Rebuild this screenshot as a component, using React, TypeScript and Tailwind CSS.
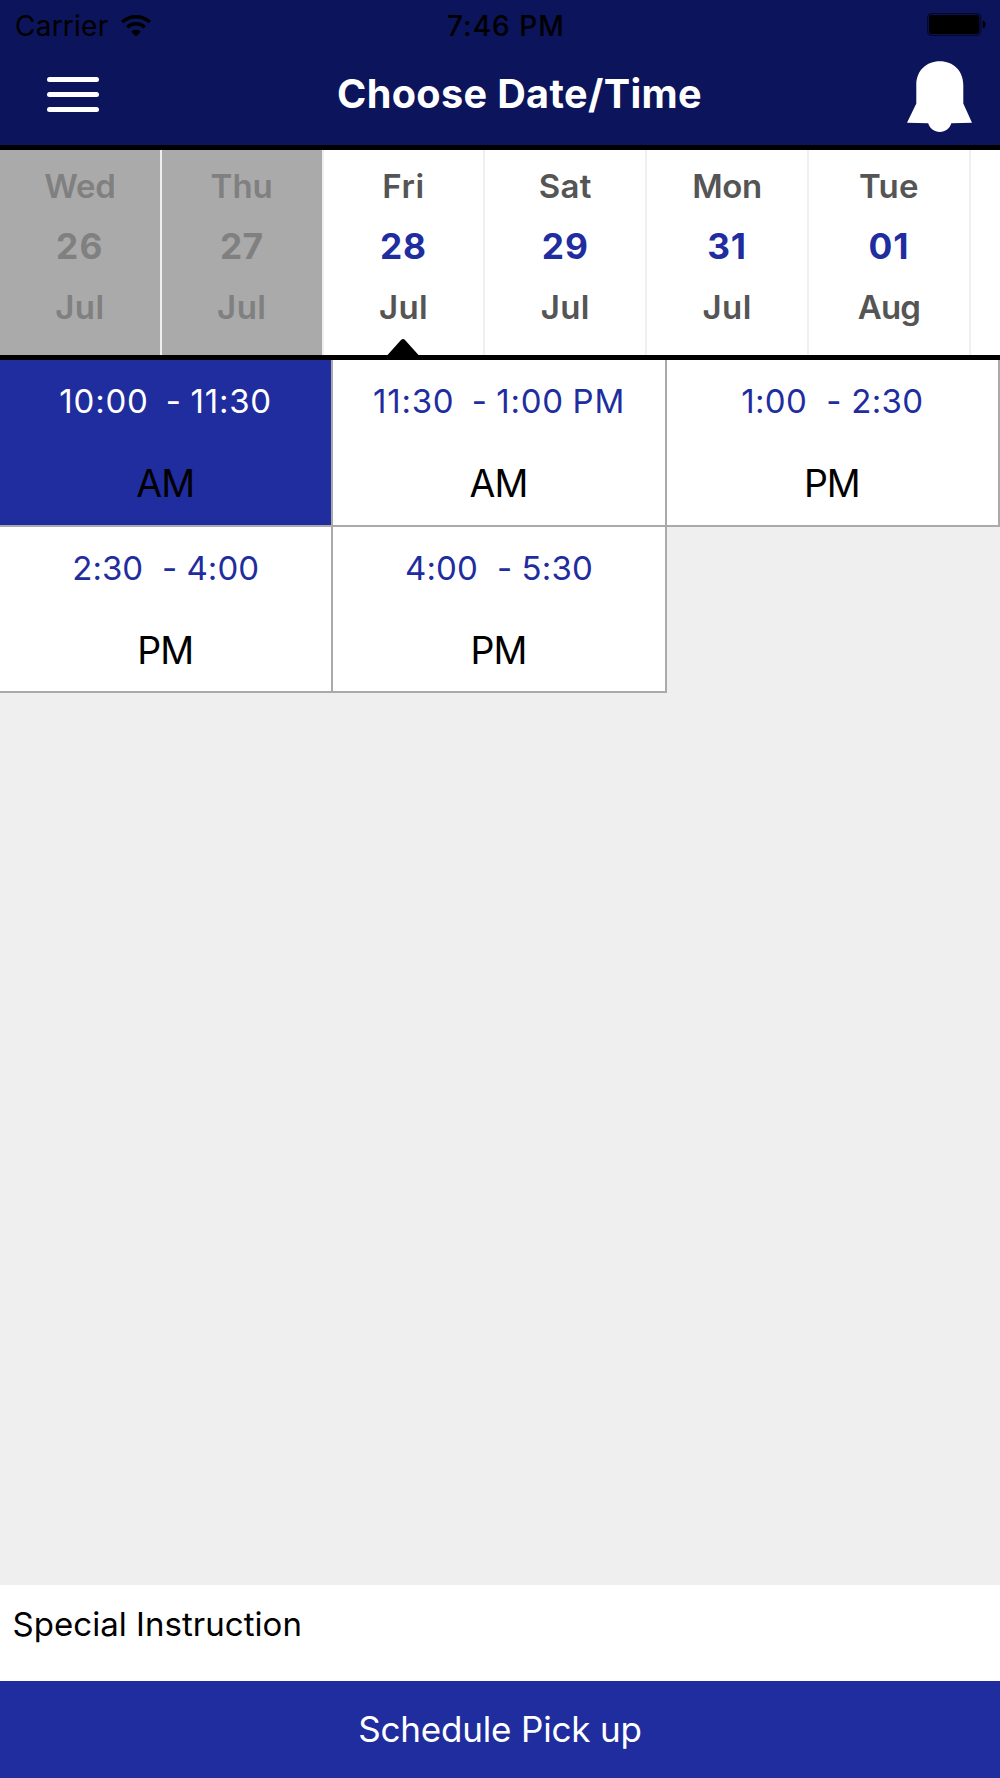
type Day = { name: string; date: string; month: string; state?: "past" | "active"; nameGap: string; dateGap: string; monthGap: string };

const days: Day[] = [
  { name: "Wed", date: "26", month: "Jul", state: "past", nameGap: "tracking-[-0.3px]", dateGap: "tracking-[1.2px]", monthGap: "tracking-[0.4px]" },
  { name: "Thu", date: "27", month: "Jul", state: "past", nameGap: "", dateGap: "tracking-[0.2px]", monthGap: "tracking-[0.4px]" },
  { name: "Fri", date: "28", month: "Jul", state: "active", nameGap: "tracking-[0.6px]", dateGap: "tracking-[1px]", monthGap: "tracking-[0.4px]" },
  { name: "Sat", date: "29", month: "Jul", nameGap: "tracking-[0.4px]", dateGap: "tracking-[1px]", monthGap: "tracking-[0.4px]" },
  { name: "Mon", date: "31", month: "Jul", nameGap: "tracking-[-0.3px]", dateGap: "tracking-[0.8px]", monthGap: "tracking-[0.4px]" },
  { name: "Tue", date: "01", month: "Aug", nameGap: "tracking-[0.3px]", dateGap: "tracking-[0.8px]", monthGap: "tracking-[-0.9px]" },
];

const slots = [
  { time: "10:00\u00a0 - 11:30", period: "AM", selected: true, gap: "tracking-[0.8px] [word-spacing:-1.5px]" },
  { time: "11:30\u00a0 - 1:00 PM", period: "AM", gap: "tracking-[0.8px] [word-spacing:-1.5px]" },
  { time: "1:00\u00a0 - 2:30", period: "PM", gap: "tracking-[0.31px]" },
  { time: "2:30\u00a0 - 4:00", period: "PM", gap: "tracking-[0.05px]" },
  { time: "4:00\u00a0 - 5:30", period: "PM", gap: "tracking-[0.14px]" },
];

function WifiIcon() {
  return (
    <svg className="ml-[13px] h-[22px] w-[30px]" viewBox="0 0 30 22" fill="none" stroke="#000" strokeWidth="3.4">
      <path d="M1.2 7.1C9-0.1 21-0.1 28.8 7.1" />
      <path d="M6.2 12.2C11.2 7.5 18.8 7.5 23.8 12.2" />
      <path d="M15 21.5L10.2 16.7C12.8 14.2 17.2 14.2 19.8 16.7Z" fill="#000" stroke="none" />
    </svg>
  );
}

function BatteryIcon() {
  return (
    <svg className="h-[23px] w-[60px]" viewBox="0 0 60 23">
      <rect x="0.6" y="0.6" width="53.2" height="21.8" rx="4" fill="none" stroke="#050828" strokeWidth="1.2" />
      <rect x="2" y="2" width="50.4" height="19" rx="2.4" fill="#000" />
      <path d="M55.8 7.6C59.6 8.2 59.6 14.8 55.8 15.4Z" fill="#000" />
    </svg>
  );
}

function BellIcon() {
  return (
    <svg className="h-[71px] w-[65px]" viewBox="0 0 65 71" fill="#fff">
      <path d="M9.3 24C9.3 9.5 19.5 0.3 32.8 0.3S56.3 9.5 56.3 24V42.5L65 61.8L44.3 62.3C43 67.5 38.3 71 32.8 71S22.6 67.5 21.2 62.3L0 61.8L9.3 42.5Z" />
    </svg>
  );
}

export default function App() {
  return (
    <div className="flex h-[1778px] w-[1000px] flex-col overflow-hidden bg-[#efefef] font-['Inter',sans-serif] text-black">
      <header className="h-[150px] shrink-0 border-b-[5px] border-black bg-[#0c145b]">
        <div className="flex h-[51px] items-center">
          <div className="flex w-[447px] items-center pl-[15px]">
            <span className="pt-px text-[28px] leading-[51px] tracking-[0.24px]">Carrier</span>
            <WifiIcon />
          </div>
          <span className="pt-px text-[28px] leading-[51px] font-medium tracking-[1.05px]">7:46 PM</span>
          <div className="mr-[13px] ml-auto pb-[2px]">
            <BatteryIcon />
          </div>
        </div>
        <div className="flex h-[85px] items-center text-white">
          <div className="w-[337px] pt-[2px] pl-[46.7px]">
            <button className="flex flex-col gap-[10.5px]" aria-label="Menu">
              <span className="h-[4.5px] w-[52px] rounded-full bg-white" />
              <span className="h-[4.5px] w-[52px] rounded-full bg-white" />
              <span className="h-[4.5px] w-[52px] rounded-full bg-white" />
            </button>
          </div>
          <h1 className="pt-[2px] text-[39.6px] leading-[85px] font-[650] tracking-[0.37px] whitespace-nowrap">Choose Date/Time</h1>
          <button className="mr-[28px] ml-auto pt-[6px]" aria-label="Notifications">
            <BellIcon />
          </button>
        </div>
      </header>

      <div className="flex h-[210px] shrink-0 overflow-hidden border-b-[5px] border-black bg-white">
        {days.map((d) => (
          <div
            key={d.date}
            className={`relative flex w-[161.8px] shrink-0 flex-col items-center border-r-2 border-[#efefef] pt-[6px] text-[33px] leading-[60px] font-[560] ${
              d.state === "past" ? "bg-[#aaaaaa] bg-clip-padding text-[#808080]" : "text-[#555555]"
            }`}
          >
            <span className={d.nameGap}>{d.name}</span>
            <span className={`pt-px text-[35.3px] leading-[60px] font-bold ${d.dateGap} ${d.state === "past" ? "" : "text-[#1f2d9f]"}`}>{d.date}</span>
            <span className={d.monthGap}>{d.month}</span>
            {d.state === "active" && (
              <svg className="absolute bottom-0 left-1/2 h-[16px] w-[32px] -translate-x-1/2" viewBox="0 0 32 16">
                <path d="M0.5 16L14 1Q16 -0.8 18 1L31.5 16Z" fill="#000" />
              </svg>
            )}
          </div>
        ))}
      </div>

      <div className="grid shrink-0 auto-rows-[166.6px] grid-cols-3">
        {slots.map((s) => (
          <div
            key={s.time}
            className={`flex flex-col items-center border-r-2 border-b-2 border-[#aaaaaa] ${s.selected ? "bg-[#1f2d9f] text-white" : "bg-white text-[#1f2d9f]"}`}
          >
            <span className={`text-[33px] leading-[82px] whitespace-nowrap ${s.gap}`}>{s.time}</span>
            <span className="pt-px pr-px text-[37.5px] leading-[82px] tracking-[-1px] text-black">{s.period}</span>
          </div>
        ))}
      </div>

      <div className="mt-auto h-[96px] shrink-0 bg-white pl-[12.5px] text-[33px] leading-[78px] tracking-[0.04px]">Special Instruction</div>
      <button className="h-[97px] shrink-0 bg-[#1f2d9f] text-[35px] leading-[97px] tracking-[-0.17px] text-white">Schedule Pick up</button>
    </div>
  );
}
